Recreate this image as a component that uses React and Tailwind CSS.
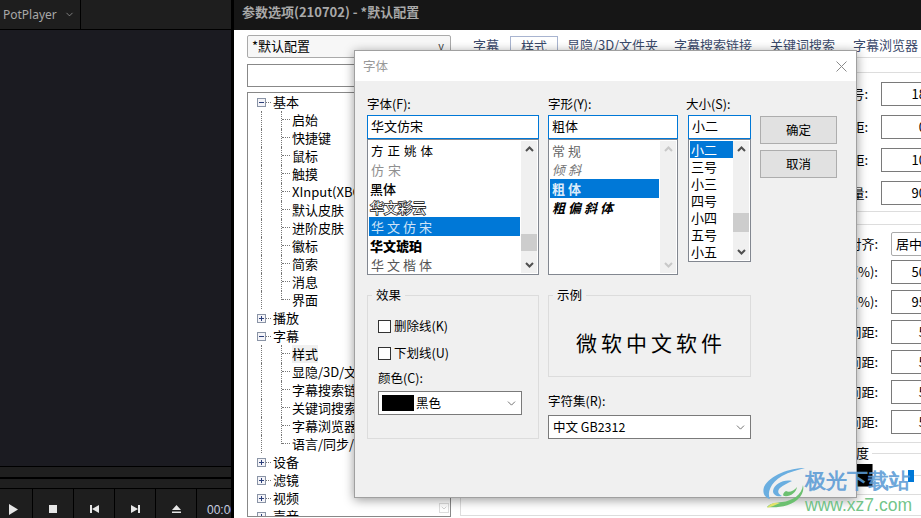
import { ChevronDown } from "lucide-react";

const CJK = "font-['Noto_Sans_CJK_SC','Noto_Sans',sans-serif]";

const TREE = [
  { label: "基本", open: true, children: ["启始", "快捷键", "鼠标", "触摸", "XInput(XBOX)", "默认皮肤", "进阶皮肤", "徽标", "简索", "消息", "界面"] },
  { label: "播放" },
  { label: "字幕", open: true, children: ["样式", "显隐/3D/文件夹", "字幕搜索链接", "关键词搜索", "字幕浏览器", "语言/同步/其他"] },
  { label: "设备" },
  { label: "滤镜" },
  { label: "视频" },
  { label: "声音" },
];

const TABS = [
  { label: "字幕", cls: "ml-[13px] w-[26px]" },
  { label: "样式", cls: "ml-[11px] w-[48px] border border-b-0 border-[#a8b4d0] text-center" },
  { label: "显隐/3D/文件夹", cls: "ml-[9px] w-[89px]" },
  { label: "字幕搜索链接", cls: "ml-[18px] w-[78px]" },
  { label: "关键词搜索", cls: "ml-[18px] w-[65px]" },
  { label: "字幕浏览器", cls: "ml-[18px] w-[65px]" },
];

const FONTS = [
  { label: "方正姚体", cls: "tracking-[4px] pl-[2px] text-[12.5px]" },
  { label: "仿宋", cls: "tracking-[4px] pl-[2px] text-[#8f8f8f]" },
  { label: "黑体", cls: "pl-[1px] font-medium" },
  { label: "华文彩云", cls: "pl-[1px] text-[14px] text-white [-webkit-text-stroke:1.6px_#222] [paint-order:stroke_fill]" },
  { label: "华文仿宋", cls: "tracking-[3px] pl-[2px] text-[#cfe4f7] bg-[#0078d7]" },
  { label: "华文琥珀", cls: "pl-[1px] font-black" },
  { label: "华文楷体", cls: "tracking-[3px] pl-[2px] text-[#555]" },
];

const STYLES = [
  { label: "常规", cls: "tracking-[3px] text-[#666]" },
  { label: "倾斜", cls: "tracking-[3px] italic text-[#777]" },
  { label: "粗体", cls: "tracking-[3px] font-bold text-[#dcecfa] bg-[#0078d7]" },
  { label: "粗偏斜体", cls: "tracking-[3px] italic font-bold" },
];

const SIZES = ["小二", "三号", "小三", "四号", "小四", "五号", "小五"];

function Expander({ open }) {
  return (
    <span className="flex h-[9px] w-[9px] shrink-0 items-center justify-center border border-[#8a94a6] bg-[#f4f4f8] text-[#2b3f7a]">
      <svg width="7" height="7" viewBox="0 0 7 7">
        <path d={open ? "M1 3.5H6" : "M1 3.5H6M3.5 1V6"} stroke="currentColor" fill="none" />
      </svg>
    </span>
  );
}

function Guide({ last }) {
  return (
    <span className={`w-[9px] shrink-0 self-start border-l border-dotted border-[#777] ${last ? "h-[9px]" : "h-[18px]"}`}>
      <span className="block h-[9px] border-b border-dotted border-[#777]" />
    </span>
  );
}

function TreeRow({ item, isLast }) {
  return (
    <>
      <div className="flex h-[18px] items-center pl-[9px]">
        <Expander open={item.open} />
        <span className="w-[5px] border-b border-dotted border-[#777]" />
        <span className="ml-[2px] whitespace-nowrap">{item.label}</span>
      </div>
      {item.children?.map((c, i) => (
        <div key={c} className="flex h-[18px] items-center pl-[13px]">
          <span className={`h-full w-[20px] shrink-0 ${isLast ? "" : "border-l border-dotted border-[#777]"}`} />
          <Guide last={i === item.children.length - 1} />
          <span className={`ml-[2px] whitespace-nowrap ${c === "样式" ? "bg-[#f0f0f0]" : ""}`}>{c}</span>
        </div>
      ))}
    </>
  );
}

function ScrollArrow({ up, color = "#505050" }) {
  return (
    <svg width="9" height="6" viewBox="0 0 9 6">
      <path d={up ? "M1 5L4.5 1.5L8 5" : "M1 1L4.5 4.5L8 1"} stroke={color} strokeWidth="2" fill="none" />
    </svg>
  );
}

function Scrollbar({ thumb, disabled }) {
  const color = disabled ? "#c8c8c8" : "#505050";
  return (
    <div className="relative flex w-[16px] shrink-0 flex-col items-center justify-between bg-[#f0f0f0] py-[5px]">
      <ScrollArrow up color={color} />
      {thumb && <div className={`absolute left-0 right-0 bg-[#cdcdcd] ${thumb}`} />}
      <ScrollArrow color={color} />
    </div>
  );
}

function FieldInput({ value }) {
  return (
    <div className="flex h-[24px] items-center border border-[#0078d7] bg-white px-[3px] pb-[2px] text-[13px]">{value}</div>
  );
}

function FieldLabel({ children, cls = "" }) {
  return <div className={`h-[20px] pt-[1px] text-[12.5px] leading-[16px] ${cls}`}>{children}</div>;
}

function Group({ title, cls, children }) {
  return (
    <div className={`border border-[#dcdcdc] ${cls}`}>
      <span className="-mt-[9px] ml-[4px] block w-fit bg-[#f0f0f0] px-[4px] text-[12.5px] leading-[16px]">{title}</span>
      {children}
    </div>
  );
}

function Checkbox({ label }) {
  return (
    <div className="flex items-center text-[12.5px]">
      <span className="h-[13px] w-[13px] border border-[#333] bg-white" />
      <span className="ml-[3px] leading-[16px]">{label}</span>
    </div>
  );
}

function FontDialog() {
  return (
    <div className={`absolute left-[354px] top-[50px] flex h-[448px] w-[503px] flex-col border border-[#a0a0a0] bg-[#f0f0f0] shadow-[0_2px_10px_rgba(0,0,0,0.4)] ${CJK}`}>
      <div className="flex h-[30px] shrink-0 items-center justify-between bg-white pl-[8px] pr-[9px] text-[12.5px] text-[#999]">
        <span>字体</span>
        <svg width="11" height="11" viewBox="0 0 11 11">
          <path d="M0.5 0.5L10.5 10.5M10.5 0.5L0.5 10.5" stroke="#8a8a8a" fill="none" />
        </svg>
      </div>
      <div className="pl-[12px] pt-[14px]">
        <div className="flex">
          <div className="w-[172px] shrink-0">
            <FieldLabel>字体(F):</FieldLabel>
            <FieldInput value="华文仿宋" />
            <div className="flex h-[136px] border border-[#828790] bg-white p-[1px]">
              <div className="flex-1 overflow-hidden text-[13px] leading-[19px]">
                {FONTS.map((f) => (
                  <div key={f.label} className={`h-[19px] w-[151px] ${f.cls}`}>{f.label}</div>
                ))}
              </div>
              <Scrollbar thumb="top-[93px] h-[17px]" />
            </div>
          </div>
          <div className="ml-[9px] w-[130px] shrink-0">
            <FieldLabel>字形(Y):</FieldLabel>
            <FieldInput value="粗体" />
            <div className="flex h-[136px] border border-[#828790] bg-white p-[1px]">
              <div className="flex-1 overflow-hidden text-[13px] leading-[19px]">
                {STYLES.map((s) => (
                  <div key={s.label} className={`h-[19px] w-[109px] pl-[2px] ${s.cls}`}>{s.label}</div>
                ))}
              </div>
              <Scrollbar disabled />
            </div>
          </div>
          <div className="ml-[10px] w-[63px] shrink-0">
            <FieldLabel cls="-ml-[2px]">大小(S):</FieldLabel>
            <FieldInput value="小二" />
            <div className="flex h-[123px] border border-[#828790] bg-white p-[1px]">
              <div className="flex-1 overflow-hidden text-[13px] leading-[17px]">
                {SIZES.map((s, i) => (
                  <div key={s} className={`h-[17px] pl-[1px] ${i === 0 ? "bg-[#0078d7] text-white" : ""}`}>{s}</div>
                ))}
              </div>
              <Scrollbar thumb="top-[72px] h-[19px]" />
            </div>
          </div>
          <div className="ml-[9px] w-[77px] shrink-0 pt-[21px] text-[12.5px]">
            <div className="flex h-[28px] items-center justify-center border border-[#adadad] bg-[#e1e1e1]">确定</div>
            <div className="mt-[6px] flex h-[28px] items-center justify-center border border-[#adadad] bg-[#e1e1e1]">取消</div>
          </div>
        </div>

        <div className="mt-[20px] flex">
          <Group title="效果" cls="h-[144px] w-[172px] shrink-0">
            <div className="pl-[10px] pr-[16px] pt-[15px]">
              <Checkbox label="删除线(K)" />
              <div className="mt-[11px]"><Checkbox label="下划线(U)" /></div>
              <div className="mt-[9px] h-[21px] text-[12.5px] leading-[16px]">颜色(C):</div>
              <div className="flex h-[24px] items-center border border-[#7a7a7a] bg-white pl-[3px] pr-[3px] text-[12.5px]">
                <span className="h-[16px] w-[32px] bg-black" />
                <span className="ml-[2px]">黑色</span>
                <ChevronDown size={13} strokeWidth={1.5} className="ml-auto text-[#555]" />
              </div>
            </div>
          </Group>
          <div className="ml-[9px] w-[203px] shrink-0">
            <Group title="示例" cls="h-[82px]">
              <div className="pt-[24px] pl-[3px] text-center text-[21px] leading-[30px] tracking-[4px]">微软中文软件</div>
            </Group>
            <div className="mt-[16px] h-[22px] text-[12.5px] leading-[16px]">字符集(R):</div>
            <div className="flex h-[24px] items-center border border-[#7a7a7a] bg-white pl-[4px] pr-[3px] text-[12.5px]">
              <span>中文 GB2312</span>
              <ChevronDown size={13} strokeWidth={1.5} className="ml-auto text-[#555]" />
            </div>
          </div>
        </div>
      </div>
    </div>
  );
}

function NumRow({ label, value, cls }) {
  return (
    <div className="flex h-[24px] items-center justify-end">
      <span className="mr-[13px] whitespace-nowrap text-[13px]">{label}</span>
      <span className={`flex h-[24px] shrink-0 items-center justify-end border border-[#7a7a7a] bg-white pr-[4px] text-[13px] ${cls}`}>{value}</span>
    </div>
  );
}

function Watermark() {
  return (
    <div className="absolute left-[762px] top-[467px] flex items-start">
      <svg width="45" height="42" viewBox="0 0 45 42">
        <path d="M43 1C28 1 8 8 2 20C0 26 3 31 8 32C5 26 8 16 20 9C27 5 36 3 43 1Z" fill="#6aaee0" />
        <path d="M30 14C22 12 12 17 11 24C11 28 15 30 20 29C16 27 15 24 18 21C21 18 26 16 30 14Z" fill="#6aaee0" />
        <path d="M41 18C40 28 30 34 20 35C13 36 8 36 5 40C14 41 30 40 38 30C41 26 42 22 41 18Z" fill="#6cc070" />
        <path d="M24 24C27 26 32 24 35 20C34 26 28 30 22 29C20 28 22 25 24 24Z" fill="#6cc070" />
        <path d="M5 41C8 36 13 35 18 36C13 38 9 40 5 41Z" fill="#e3e36a" />
      </svg>
      <div className="-ml-[2px] flex flex-col">
        <span className="text-[21px] font-bold leading-[26px] text-[#5b9bd5]/90">极光下载站</span>
        <span className="mt-[2px] font-['Liberation_Sans',sans-serif] text-[17.5px] leading-[20px] text-[#62bd7a]/90">www.xz7.com</span>
      </div>
    </div>
  );
}

function PlayerPane() {
  return (
    <div className="flex w-[231px] shrink-0 flex-col bg-[#1b1b21]">
      <div className="flex h-[30px] shrink-0 border-b border-black bg-[#1e1e1e]">
        <div className="flex w-[81px] items-center border-r border-black pl-[3px] font-['Noto_Sans',sans-serif] text-[12px] text-[#a8a8a8]">
          <span>PotPlayer</span>
          <ChevronDown size={11} strokeWidth={1.5} className="ml-[7px]" />
        </div>
      </div>
      <div className="flex-1 border-b border-black" />
      <div className="h-[10px] shrink-0 bg-[#1f1f1f]" />
      <div className="h-[2px] shrink-0 bg-black" />
      <div className="h-[9px] shrink-0 bg-[#1f1f1f]" />
      <div className="flex h-[30px] shrink-0 border-t border-black bg-[#1e1e1e] text-[#e6e6e6]">
        <div className="flex w-[33px] shrink-0 items-center justify-center border-r border-black pr-[6px] pt-[11px]">
          <svg width="9" height="11" viewBox="0 0 9 11"><path d="M0 0L9 5.5L0 11Z" fill="currentColor" /></svg>
        </div>
        <div className="flex w-[41px] shrink-0 items-center justify-center border-r border-black pt-[11px]">
          <svg width="8" height="8" viewBox="0 0 8 8"><rect width="8" height="8" fill="currentColor" /></svg>
        </div>
        <div className="flex w-[41px] shrink-0 items-center justify-center border-r border-black pt-[11px]">
          <svg width="9" height="8" viewBox="0 0 9 8"><path d="M0 0H2V8H0ZM9 0V8L2 4Z" fill="currentColor" /></svg>
        </div>
        <div className="flex w-[41px] shrink-0 items-center justify-center border-r border-black pt-[11px]">
          <svg width="9" height="8" viewBox="0 0 9 8"><path d="M9 0H7V8H9ZM0 0V8L7 4Z" fill="currentColor" /></svg>
        </div>
        <div className="flex w-[41px] shrink-0 items-center justify-center border-r border-black pt-[11px]">
          <svg width="9" height="8" viewBox="0 0 9 8"><path d="M4.5 0L9 5H0ZM0 6.5H9V8H0Z" fill="currentColor" /></svg>
        </div>
        <div className="overflow-hidden whitespace-nowrap pl-[10px] pt-[13px] font-['Liberation_Sans',sans-serif] text-[12px] leading-[16px] text-[#c8d0e0]">00:00:00</div>
      </div>
    </div>
  );
}

function SettingsPane() {
  return (
    <div className={`flex w-[687px] shrink-0 flex-col bg-white text-black ${CJK}`}>
      <div className="flex h-[30px] shrink-0 items-center bg-[#161616] pb-[6px] pl-[8px] text-[13px] font-bold text-[#a9a9a9]">
        参数选项(210702) - *默认配置
      </div>
      <div className="flex flex-1 pl-[13px]">
        <div className="w-[204px] shrink-0 pt-[5px]">
          <div className="flex h-[23px] items-center justify-between rounded-[2px] border border-[#aaa] bg-[#f7f7f7] pb-[2px] pl-[4px] pr-[6px] text-[13px]">
            <span>*默认配置</span>
            <span className="text-[11px] text-[#444]">v</span>
          </div>
          <div className="mt-[6px] h-[23px] border border-[#888]" />
          <div className="mt-[5px] flex h-[425px] overflow-hidden border border-[#888] text-[13px] leading-[18px]">
            <div className="flex-1 overflow-hidden">
              {TREE.map((item, i) => (
                <TreeRow key={item.label} item={item} isLast={i === TREE.length - 1} />
              ))}
            </div>
            <div className="flex w-[12px] shrink-0 flex-col items-center justify-end pb-[3px]">
              <div className="flex h-[10px] w-[10px] items-center justify-center border border-[#ddd]">
                <ChevronDown size={8} className="text-[#bbb]" />
              </div>
            </div>
          </div>
        </div>
        <div className="ml-[9px] w-[471px] shrink-0">
          <div className="mt-[6px] flex h-[22px] items-start border-b border-[#ddd] text-[13px] leading-[17px] text-[#3b4a6b]">
            {TABS.map((t) => (
              <span key={t.label} className={`h-[22px] shrink-0 whitespace-nowrap ${t.cls}`}>{t.label}</span>
            ))}
          </div>
          <div className="mt-[14px] flex flex-col gap-[9px] border-y border-[#ddd] pb-[6px] pt-[9px]">
            <NumRow label="字号:" value="18" cls="w-[50px]" />
            <NumRow label="字距:" value="0" cls="w-[50px]" />
            <NumRow label="行距:" value="10" cls="w-[50px]" />
            <NumRow label="字重量:" value="90" cls="w-[50px]" />
          </div>
          <div className="mt-[12px] border-y border-[#ddd] pb-[8px] pt-[7px]">
            <div className="flex h-[24px] items-center justify-end">
              <span className="mr-[13px] whitespace-nowrap text-[13px]">对齐:</span>
              <span className="flex h-[24px] w-[40px] shrink-0 items-center rounded-[2px] border border-[#aaa] pl-[4px] text-[13px]">居中</span>
            </div>
            <div className="mt-[4px] flex flex-col gap-[6px]">
              <NumRow label="水平位置(%):" value="50" cls="w-[40px]" />
              <NumRow label="垂直位置(%):" value="95" cls="w-[40px]" />
              <NumRow label="左间距:" value="5" cls="w-[40px]" />
              <NumRow label="右间距:" value="5" cls="w-[40px]" />
              <NumRow label="上间距:" value="5" cls="w-[40px]" />
              <NumRow label="下间距:" value="5" cls="w-[40px]" />
            </div>
          </div>
          <div className="mt-[3px] flex h-[14px] items-center pl-[370px] text-[13px]">
            <span className="whitespace-nowrap">透明度</span>
            <span className="ml-[3px] flex-1 border-t border-[#ddd]" />
          </div>
          <div className="mt-[4px] flex h-[23px] items-center pl-[397px]">
            <span className="h-[23px] w-[16px] shrink-0 border-b border-r border-[#777] bg-black" />
            <span className="ml-[35px] h-[12px] w-[6px] shrink-0 bg-[#0078d7]" />
            <span className="flex-1 border-t border-[#ddd]" />
          </div>
          <div className="mt-[7px] h-[22px] border border-[#ddd]" />
        </div>
      </div>
    </div>
  );
}

export default function App() {
  return (
    <div className="relative flex h-[518px] w-[921px] overflow-hidden bg-black">
      <PlayerPane />
      <div className="w-[3px] shrink-0 bg-black" />
      <SettingsPane />
      <FontDialog />
      <Watermark />
    </div>
  );
}
